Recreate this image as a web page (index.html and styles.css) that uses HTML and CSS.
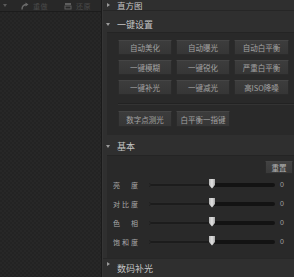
FILE: index.html
```html
<!DOCTYPE html>
<html lang="zh">
<head>
<meta charset="utf-8">
<link rel="stylesheet" href="styles.css">
</head>
<body>
<div class="app">
  <div class="left">
    <div class="toolbar">
      <span class="tb-caret"></span>
      <svg class="tb-icon redo" width="8" height="8" viewBox="0 0 8 8"><path d="M1 7.5 C1 4 3 2.5 6 2.5" fill="none" stroke="#6a6a6a" stroke-width="1.4"/><path d="M4.5 0.5 L7.5 2.5 L4.5 4.5 Z" fill="#6a6a6a"/></svg>
      <span class="tb-text">重做</span>
      <svg class="tb-icon restore" width="8" height="8" viewBox="0 0 8 8"><rect x="1" y="1" width="6" height="2" fill="#5e5e5e"/><rect x="1" y="4" width="6" height="3" fill="none" stroke="#5e5e5e" stroke-width="1"/></svg>
      <span class="tb-text">还原</span>
    </div>
    <div class="canvas"></div>
  </div>
  <div class="right">
    <div class="hdr hdr-first"><span class="tri tri-r"></span>直方图</div>
    <div class="hdr hdr-quick"><span class="tri tri-d"></span>一键设置</div>
    <div class="box box-quick">
      <div class="btn-grid">
        <button class="btn">自动美化</button>
        <button class="btn">自动曝光</button>
        <button class="btn">自动白平衡</button>
        <button class="btn">一键模糊</button>
        <button class="btn">一键锐化</button>
        <button class="btn">严重白平衡</button>
        <button class="btn">一键补光</button>
        <button class="btn">一键减光</button>
        <button class="btn">高ISO降噪</button>
      </div>
      <div class="sep"></div>
      <div class="btn-row">
        <button class="btn">数字点测光</button>
        <button class="btn">白平衡一指键</button>
      </div>
    </div>
    <div class="hdr hdr-basic"><span class="tri tri-d"></span>基本</div>
    <div class="box box-basic">
      <div class="reset-row"><button class="btn btn-reset">重置</button></div>
      <div class="slider-row">
        <span class="lbl"><span>亮</span><span>度</span></span>
        <span class="track"><span class="fill"></span><span class="thumb"></span></span>
        <span class="val">0</span>
      </div>
      <div class="slider-row">
        <span class="lbl"><span>对</span><span>比</span><span>度</span></span>
        <span class="track"><span class="fill"></span><span class="thumb"></span></span>
        <span class="val">0</span>
      </div>
      <div class="slider-row">
        <span class="lbl"><span>色</span><span>相</span></span>
        <span class="track"><span class="fill"></span><span class="thumb"></span></span>
        <span class="val">0</span>
      </div>
      <div class="slider-row">
        <span class="lbl"><span>饱</span><span>和</span><span>度</span></span>
        <span class="track"><span class="fill"></span><span class="thumb"></span></span>
        <span class="val">0</span>
      </div>
    </div>
    <div class="hdr hdr-last"><span class="tri tri-r"></span>数码补光</div>
  </div>
</div>
</body>
</html>
```

FILE: styles.css
```css
* { box-sizing: border-box; }
html, body {
  margin: 0;
  padding: 0;
  width: 294px;
  height: 277px;
  overflow: hidden;
  background: #262626;
  font-family: "Noto Sans CJK SC", "Noto Sans", sans-serif;
}
.app {
  display: flex;
  width: 294px;
  height: 277px;
}
.left {
  width: 102px;
  flex: none;
  display: flex;
  flex-direction: column;
  border-right: 1px solid #1a1a1a;
  background: #252525;
}
.toolbar {
  height: 12px;
  flex: none;
  display: flex;
  align-items: center;
  padding-left: 3px;
  background: #282828;
  border-bottom: 1px solid #1c1c1c;
  box-shadow: 0 1px 0 #2e2e2e;
}
.tb-caret {
  width: 0; height: 0;
  border-top: 3px solid #5a5a5a;
  border-left: 2px solid transparent;
  border-right: 2px solid transparent;
  margin-right: 14px;
}
.tb-icon { flex: none; display: block; }
.tb-icon.restore { margin-left: 16px; }
.tb-text {
  font-size: 7px;
  line-height: 8px;
  color: #4a4a4a;
  margin-left: 4px;
  letter-spacing: 0.5px;
}
.canvas {
  flex: 1;
  background-color: #252525;
  background-image: repeating-conic-gradient(#272727 0 25%, #232323 0 50%);
  background-size: 4px 4px;
}
.right {
  flex: 1;
  display: flex;
  flex-direction: column;
  background: #2f2f2f;
  border-left: 1px solid #353535;
  min-width: 0;
}
.hdr {
  display: flex;
  align-items: center;
  padding-left: 3px;
  font-size: 9px;
  color: #c4c4c4;
  flex: none;
  white-space: nowrap;
}
.tri {
  width: 0; height: 0;
  margin-right: 7px;
  flex: none;
}
.tri-r {
  border-left: 3px solid #9a9a9a;
  border-top: 2px solid transparent;
  border-bottom: 2px solid transparent;
  margin-left: 1px;
  margin-right: 7px;
}
.tri-d {
  border-top: 3px solid #9a9a9a;
  border-left: 2px solid transparent;
  border-right: 2px solid transparent;
}
.hdr-first {
  height: 11px;
  line-height: 10px;
  font-size: 8.5px;
  align-items: center;
  padding-bottom: 1px;
  border-bottom: 1px solid #262626;
}
.hdr-quick {
  height: 21px;
  padding-top: 6px;
  line-height: 14px;
}
.hdr-basic, .hdr-last {
  height: 20px;
  padding-top: 3px;
  line-height: 14px;
}
.hdr-last {
  flex: 1;
  align-items: flex-start;
  padding-top: 3px;
  border-top: 1px solid #272727;
}
.box {
  margin-left: 4px;
  background: #292929;
  border-top: 1px solid #242424;
  flex: none;
}
.box-quick {
  height: 103px;
  padding: 7px 0 0 11px;
}
.btn-grid {
  display: grid;
  grid-template-columns: 54px 54px 55px;
  grid-auto-rows: 15px;
  column-gap: 4px;
  row-gap: 5px;
}
.btn {
  display: flex;
  align-items: center;
  justify-content: center;
  margin: 0;
  padding: 0;
  font-family: "Noto Sans CJK SC", "Noto Sans", sans-serif;
  font-size: 7.5px;
  color: #a2a2a2;
  background: linear-gradient(#3c3c3c, #363636);
  border: 1px solid #2b2b2b;
  border-top-color: #454545;
  border-radius: 1px;
  white-space: nowrap;
  height: 15px;
}
.sep {
  margin-top: 8px;
  height: 2px;
  border-top: 1px solid #222222;
  border-bottom: 1px solid #333333;
}
.btn-row {
  margin-top: 6px;
  display: flex;
  gap: 4px;
}
.btn-row .btn {
  width: 54px;
  height: 16px;
}
.box-basic {
  height: 103px;
  padding-top: 5px;
}
.reset-row {
  display: flex;
  justify-content: flex-end;
  padding-right: 1px;
  height: 14px;
}
.btn-reset {
  width: 28px;
  height: 13px;
  font-size: 7.5px;
  color: #b4b4b4;
  background: linear-gradient(#424242, #3a3a3a);
}
.slider-row {
  height: 19px;
  display: flex;
  align-items: center;
  padding-left: 6px;
}
.lbl {
  width: 25px;
  display: flex;
  justify-content: space-between;
  font-size: 7px;
  color: #a8a8a8;
  flex: none;
  margin-right: 11px;
}
.track {
  position: relative;
  width: 126px;
  height: 4px;
  flex: none;
  background: #131313;
  border-radius: 2px;
}
.fill {
  position: absolute;
  left: 0;
  top: 0;
  width: 62px;
  height: 4px;
  background: #1c1c1c;
  border: 1px solid #2a2a2a;
  border-radius: 2px 0 0 2px;
}
.thumb {
  position: absolute;
  left: 60px;
  top: -4px;
  width: 6px;
  height: 10px;
  background: linear-gradient(90deg, #b8b8b8, #e0e0e0 50%, #a8a8a8);
  clip-path: polygon(0 0, 100% 0, 100% 65%, 50% 100%, 0 65%);
}
.val {
  margin-left: 5px;
  font-size: 7px;
  color: #a0a0a0;
  font-family: "Liberation Sans", sans-serif;
}
```
